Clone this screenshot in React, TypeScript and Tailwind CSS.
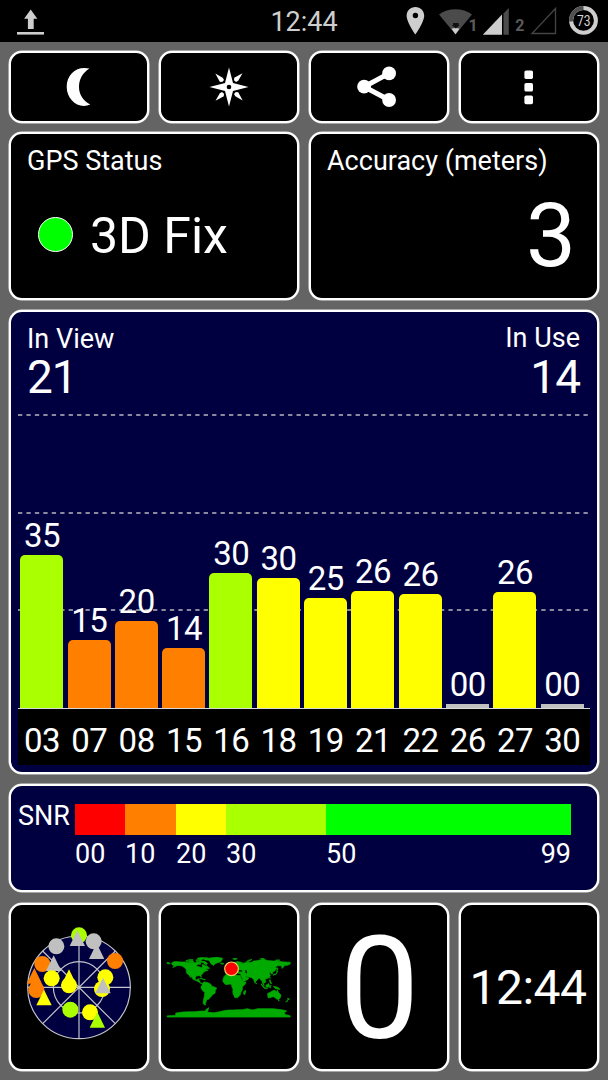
import type { ReactNode } from "react";

const card = "rounded-[13px] border-2 border-white shadow-[0_0_0_0.5px_#e8e8e8]";

function Card({
  tone = "bg-black",
  className = "",
  children,
}: {
  tone?: string;
  className?: string;
  children: ReactNode;
}) {
  return <div className={`${card} ${tone} ${className}`}>{children}</div>;
}

function StatusBar() {
  return (
    <header className="relative flex h-[42px] shrink-0 items-center justify-between bg-black">
      <svg className="ml-4 h-[42px] w-[30px]" viewBox="16 0 30 42" fill="#cecece">
        <path d="M30.700 9.500 37.300 18.700H33.700V29H27.900V18.700H24.100Z" />
        <rect x="17" y="32" width="27" height="2.600" />
      </svg>
      <span className="absolute inset-x-0 top-[9px] text-center text-[27px] leading-[27px] text-[#cecece]">
        12:44
      </span>
      <svg className="mr-1 h-[42px] w-[204px]" viewBox="400 0 204 42">
        <path
          fill="#cecece"
          fillRule="evenodd"
          d="M415.400 7c-5 0-8.800 3.900-8.800 8.800 0 6.300 8.800 18.700 8.800 18.700s8.800-12.400 8.800-18.700c0-4.900-3.800-8.800-8.800-8.800Zm0 5.800a2.700 2.700 0 1 1 0 5.400 2.700 2.700 0 0 1 0-5.400Z"
        />
        <path d="M439 14.500C448 7.500 463 7.500 472 14.500L455.500 34.500Z" fill="#4b4b4b" />
        <path d="M451.500 28.700Q455.500 27.500 459.500 28.700L455.500 34.300Z" fill="#cecece" />
        <path d="M453 23h5.600v2h1.200l-4 3.600-4-3.600H453Z" fill="#111" />
        <text x="468.500" y="31" fontSize="16" fontWeight="700" fill="#5b5b5b">1</text>
        <path d="M502 14.500V34.700H482.800Z" fill="#cecece" />
        <path d="M503.500 13.500 508.800 8V34.700H503.500Z" fill="#4b4b4b" />
        <text x="515.300" y="31" fontSize="16" fontWeight="700" fill="#5b5b5b">2</text>
        <path d="M555.500 8.500V33.500H532Z" fill="none" stroke="#444" strokeWidth="1.300" />
        <circle cx="583.500" cy="20.400" r="12.400" fill="none" stroke="#cecece" strokeWidth="4" />
        <path d="M571.150 21.500A12.400 12.400 0 0 1 583.500 8" fill="none" stroke="#505050" strokeWidth="4" />
        <text x="583.800" y="25.800" fontSize="15" textAnchor="middle" textLength="13.500" lengthAdjust="spacingAndGlyphs" fill="#d6d6d6">
          73
        </text>
      </svg>
    </header>
  );
}

const MoonIcon = () => (
  <svg className="h-10 w-10" viewBox="0 0 40 40">
    <path d="M30.400 1.600C23.500 6 20 12.500 20 20S24 33.500 31.300 37.600C19.500 42.500 7.700 33 7.700 19.800S18.500-1.500 30.400 1.600Z" fill="#fff" />
  </svg>
);

const CompassIcon = () => (
  <svg className="h-10 w-10" viewBox="-20 -20 40 40" fill="#fff">
    <path d="M0-19.500 4-4 19.500 0 4 4 0 19.500-4 4-19.500 0-4-4Z" />
    {[0, 90, 180, 270].map((a) => (
      <path key={a} transform={`rotate(${a})`} d="M13.500-13.700 9.200-6.300 7-5 5-6.800 5.200-9.200Z" />
    ))}
    <circle r="2.300" fill="#000" />
  </svg>
);

const ShareIcon = () => (
  <svg className="h-[42px] w-12" viewBox="-1.400 0.300 48 42" fill="#fff">
    <path d="M32.700 7.700 7.700 21 32.700 34.300" fill="none" stroke="#fff" strokeWidth="5" />
    <circle cx="7.700" cy="21" r="6.900" />
    <circle cx="32.700" cy="7.700" r="6.900" />
    <circle cx="32.700" cy="34.300" r="6.900" />
  </svg>
);

const DotsIcon = () => (
  <svg className="h-10 w-10" viewBox="0 0 40 40" fill="#fff">
    {[3.400, 16, 28.600].map((y) => (
      <rect key={y} x="15.400" y={y} width="8.600" height="8.600" rx="1.700" />
    ))}
  </svg>
);

const satellites = [
  { id: "03", snr: "35", height: 153, color: "bg-[#aaff00]" },
  { id: "07", snr: "15", height: 67.700, color: "bg-[#ff8000]" },
  { id: "08", snr: "20", height: 87, color: "bg-[#ff8000]" },
  { id: "15", snr: "14", height: 60, color: "bg-[#ff8000]" },
  { id: "16", snr: "30", height: 135, color: "bg-[#aaff00]" },
  { id: "18", snr: "30", height: 130, color: "bg-[#ffff00]" },
  { id: "19", snr: "25", height: 110.500, color: "bg-[#ffff00]" },
  { id: "21", snr: "26", height: 117.500, color: "bg-[#ffff00]" },
  { id: "22", snr: "26", height: 114, color: "bg-[#ffff00]" },
  { id: "26", snr: "00", height: 4.500, color: "bg-[#c0c0c0]" },
  { id: "27", snr: "26", height: 116.500, color: "bg-[#ffff00]" },
  { id: "30", snr: "00", height: 4.500, color: "bg-[#c0c0c0]" },
];

function SignalChart() {
  return (
    <Card tone="bg-[#000040]" className="relative flex h-[464px] flex-col">
      <div className="flex justify-between pl-4 pr-[17px] pt-[13px]">
        <div>
          <div className="text-[27px] leading-[28px]">In View</div>
          <div className="mt-[2px] text-[46px] leading-[44px] tracking-[-1px]">21</div>
        </div>
        <div className="text-right">
          <div className="text-[27px] leading-[27px]">In Use</div>
          <div className="mt-[3px] text-[46px] leading-[44px] tracking-[-1px]">14</div>
        </div>
      </div>
      <svg className="absolute left-[7px] top-0 h-[396px] w-[572px]" viewBox="18 312 572 396">
        {[415, 513, 610].map((y) => (
          <path key={y} d={`M18 ${y}H588`} stroke="#8a8a9e" strokeWidth="1.800" strokeDasharray="4.300 4.140" />
        ))}
      </svg>
      <div className="relative mx-[7px] flex flex-1 items-end pl-[2.300px] pr-[2px]">
        {satellites.map((s) => (
          <div key={s.id} className="flex w-[47.300px] shrink-0 flex-col">
            <span className="mb-[3px] w-[43.500px] text-center text-[33px] leading-8 tracking-[-0.500px]">
              {s.snr}
            </span>
            <div
              className={`w-[43px] ${s.height > 10 ? "rounded-t-[5px]" : ""} ${s.color}`}
              style={{ height: s.height }}
            />
          </div>
        ))}
      </div>
      <div className="mx-[7px] mb-[7px] flex h-[57px] border-t border-[#d8d8d8] bg-black pl-[2.300px] pt-[16px]">
        {satellites.map((s) => (
          <span
            key={s.id}
            className="w-[47.300px] shrink-0 pr-[3.800px] text-center text-[33px] leading-8 tracking-[-0.500px]"
          >
            {s.id}
          </span>
        ))}
      </div>
    </Card>
  );
}

const snrScale = [
  { label: "00", size: "w-[50px]", color: "bg-[#ff0000]" },
  { label: "10", size: "w-[51px]", color: "bg-[#ff8000]" },
  { label: "20", size: "w-[50px]", color: "bg-[#ffff00]" },
  { label: "30", size: "w-[100px]", color: "bg-[#aaff00]" },
  { label: "50", size: "w-[245px]", color: "bg-[#00ff00]" },
];

function SnrLegend() {
  return (
    <Card tone="bg-[#000040]" className="flex h-[108px] pl-[7px] pt-[18px]">
      <span className="-mt-px w-[57px] shrink-0 text-[27px] leading-[27px]">SNR</span>
      <div className="flex">
        {snrScale.map((s) => (
          <div key={s.label} className={s.size}>
            <div className={`h-[31px] ${s.color}`} />
            <div className="mt-[6px] flex justify-between text-[27px] leading-[27px]">
              <span>{s.label}</span>
              {s.label === "50" && <span>99</span>}
            </div>
          </div>
        ))}
      </div>
    </Card>
  );
}

const GREY = "#c0c0c0";
const ORANGE = "#ff8000";
const YELLOW = "#ffff00";
const LIME = "#aaff00";

const sky: { t: "c" | "t"; x: number; y: number; f: string }[] = [
  { t: "c", x: 207, y: 105, f: LIME },
  { t: "t", x: 202, y: 114, f: GREY },
  { t: "c", x: 139, y: 138, f: GREY },
  { t: "t", x: 260, y: 153, f: GREY },
  { t: "c", x: 251, y: 123, f: GREY },
  { t: "c", x: 315, y: 182, f: ORANGE },
  { t: "c", x: 97, y: 191, f: ORANGE },
  { t: "t", x: 131, y: 189, f: GREY },
  { t: "c", x: 125, y: 234, f: YELLOW },
  { t: "t", x: 73, y: 227, f: ORANGE },
  { t: "t", x: 79, y: 242, f: ORANGE },
  { t: "c", x: 79, y: 269, f: ORANGE },
  { t: "t", x: 102, y: 292, f: YELLOW },
  { t: "t", x: 177, y: 231, f: YELLOW },
  { t: "c", x: 177, y: 255, f: YELLOW },
  { t: "c", x: 286, y: 231, f: YELLOW },
  { t: "c", x: 276, y: 266, f: YELLOW },
  { t: "t", x: 279, y: 256, f: GREY },
  { t: "c", x: 181, y: 328, f: LIME },
  { t: "c", x: 240, y: 336, f: YELLOW },
  { t: "t", x: 262, y: 359, f: LIME },
];

const SkyPlot = () => (
  <svg className="h-[120px] w-[110px]" viewBox="42 80 330 360">
    <g fill="#000040" stroke="#c4c4cc" strokeWidth="3.500">
      <circle cx="207" cy="261" r="154" />
      <circle cx="207" cy="261" r="77" />
      <path d="M53 261H361M207 107V415M98 152 316 370M316 152 98 370" />
    </g>
    {sky.map((s, i) =>
      s.t === "c" ? (
        <circle key={i} cx={s.x} cy={s.y} r="24" fill={s.f} />
      ) : (
        <path key={i} d={`M${s.x} ${s.y - 24}l23 47h-46z`} fill={s.f} />
      ),
    )}
  </svg>
);

/* Coastlines as longitude,latitude outlines. */
const land = [
  "-168,66 -162,70 -156,71 -141,70 -128,70 -115,68 -108,68 -95,68 -94,72 -85,69 -82,67 -87,64 -94,61 -94,58 -88,56 -82,55 -80,51 -79,54 -77,57 -78,62 -73,62 -69,58 -65,60 -60,55 -56,52 -60,50 -66,50 -64,46 -60,46 -66,44 -70,43 -71,41 -74,40 -76,36 -81,31 -80,26 -82,28 -84,30 -90,30 -95,29 -97,26 -98,20 -95,18 -91,19 -90,21 -87,21 -88,16 -84,15 -84,11 -81,8 -78,9 -78,7 -82,7 -86,11 -92,14 -96,16 -105,20 -106,23 -112,30 -114,31 -110,24 -112,26 -115,30 -117,33 -121,35 -124,40 -124,48 -130,54 -136,58 -145,60 -152,59 -158,56 -164,54 -158,59 -165,61 -166,64 -161,65",
  "-73,78 -65,80 -50,82 -35,83.5 -18,81 -20,75 -24,70 -32,68 -40,65 -44,60 -51,64 -54,69 -58,75 -68,76",
  "-80,73 -70,71 -62,66 -66,62 -72,65 -73,68 -85,70 -88,73",
  "-116,73 -104,73 -102,69 -116,69",
  "-91,81 -80,83 -62,82 -75,79 -80,76 -90,77",
  "-125,74 -118,75 -118,72 -124,71",
  "-95,76.500 -80,76 -82,74 -96,74",
  "-118,76.500 -105,77 -104,75 -114,74.500",
  "-87,66 -82,66 -82,63 -86,63",
  "-180,69 -172,67 -172,65 -180,65",
  "-77,8 -72,12 -62,10 -52,5 -50,0 -44,-2 -35,-6 -39,-13 -40,-21 -48,-26 -53,-33 -57,-35 -57,-38 -62,-39 -65,-42 -66,-46 -68,-50 -69,-53 -66,-55 -72,-54 -75,-50 -74,-44 -73,-37 -71,-30 -70,-18 -76,-14 -81,-6 -80,-1 -77,4",
  "-6,36 10,37 11,33 20,31 32,31 35,28 37,21 43,12 51,12 48,5 40,-3 40,-11 35,-20 35,-24 32,-28 26,-34 18,-34 15,-27 12,-18 13,-10 9,-1 9,4 4,6 -8,4 -13,8 -17,14 -16,21 -13,28 -9,32",
  "49,-12 50,-16 47,-25 44,-24 44,-17",
  "-9,43 -9,37 -5,36 0,39 3,42 8,44 12,42 16,38 18,40 13,45 19,42 22,37 24,38 24,41 29,41 27,37 36,36 35,31 39,24 43,13 52,17 59,22 56,25 51,25 48,30 52,28 57,26 66,25 70,22 73,19 77,8 80,14 87,21 91,23 94,17 98,16 99,8 103,2 104,2 100,12 105,9 109,12 106,19 110,21 118,24 122,31 119,37 118,39 122,39 126,35 129,36 128,40 135,44 141,52 136,54 142,59 155,59 156,51 162,57 163,61 170,60 180,64 180,69 160,70 140,73 127,73 113,74 104,78 87,75 80,73 72,73 68,69 55,69 44,67 40,65 33,67 41,67 36,69 27,71 18,69 12,65 5,61 8,58 11,59 16,57 18,61 21,64 25,65 22,61 29,60 23,58 20,55 12,54 10,57 8,54 2,51 -4,48 -1,46 -2,43",
  "-5,50 1,51 -2,55 -3,58 -6,57 -4,54",
  "-10,52 -6,52 -6,55 -9,54",
  "-24,65 -19,63.500 -14,65 -16,66.500 -23,66.500",
  "12,80 25,80 22,77 15,77",
  "52,71 58,71 68,77 60,76 54,73",
  "93,80 104,80 104,78 95,78",
  "138,76 150,76 148,74 138,74",
  "130,31 132,34 137,35 141,38 141,45 145,43 141,40 140,35 135,33",
  "142,54 144,50 142,46",
  "120,18 122,18 122,14 126,8 124,6 120,12",
  "95,6 99,3 106,-5 114,-8 105,-7 98,0",
  "109,2 117,7 119,1 116,-4 110,-3",
  "120,1 125,1 122,-1 123,-5 120,-5",
  "131,-1 141,-3 147,-6 150,-10 143,-9 138,-8 133,-4",
  "114,-22 122,-18 129,-14 136,-12 137,-16 141,-17 142,-11 146,-19 153,-26 152,-33 147,-39 140,-38 136,-34 131,-31 124,-33 116,-35 115,-32",
  "145,-41 148,-41 147,-44",
  "173,-35 178,-38 175,-41 173,-39",
  "173,-41 171,-46 167,-46",
  "-85,22 -75,20 -78,22 -82,23.500",
  "-74,20 -68,19 -74,18",
  "80,9 82,7 80,6",
  "120,25 122,25 121,22",
  "-180,-87 -155,-86 -155,-79 -135,-76 -115,-75 -100,-75 -80,-73 -68,-73 -66,-68 -58,-63 -60,-70 -62,-76 -45,-78 -30,-76 -15,-72 0,-70 12,-70 30,-69 40,-69 55,-66 70,-70 85,-66 105,-66 130,-66 145,-68 160,-70 170,-73 163,-78 165,-83 180,-87 180,-90.500 -180,-90.500",
];

const WorldMap = () => (
  <svg className="h-[66px] w-[127px]" viewBox="32.500 41.500 381 198">
    <g transform="translate(220.500 137.500) scale(1.025 -1.030)">
      {land.map((p, i) => (
        <polygon key={i} points={p} fill="#00aa00" stroke="#00aa00" strokeWidth="2" />
      ))}
      <path d="M28 42 31 46 38 46 41 42ZM48 46 52 46 54 37 50 37Z" fill="#000" />
    </g>
    <circle cx="229" cy="86" r="20.500" fill="#ff0000" stroke="#e8d060" strokeWidth="3.500" />
  </svg>
);

export default function App() {
  return (
    <div className="flex h-[1080px] w-[608px] flex-col overflow-hidden bg-[#646464] font-['Roboto',sans-serif] text-white">
      <StatusBar />
      <main className="flex flex-col px-[9px] pt-[9px]">
        <div className="grid grid-cols-4 gap-x-[10px]">
          {[MoonIcon, CompassIcon, ShareIcon, DotsIcon].map((Icon, i) => (
            <button key={i} className={`${card} flex h-[72px] items-center justify-center bg-black`}>
              <Icon />
            </button>
          ))}
        </div>

        <div className="mt-[9px] grid grid-cols-2 gap-x-[10px]">
          <Card className="h-[168px] px-4 pt-[14px]">
            <div className="text-[27px] leading-[27px]">GPS Status</div>
            <div className="mt-[33px] flex items-center pl-[11px]">
              <span className="h-[35px] w-[35px] rounded-full border border-white bg-[#00ff00]" />
              <span className="ml-[17px] pt-[3px] text-[50px] leading-[50px]">3D Fix</span>
            </div>
          </Card>
          <Card className="h-[168px] pl-4 pr-[21px] pt-[14px]">
            <div className="text-[27px] leading-[27px]">Accuracy (meters)</div>
            <div className="mt-[16px] text-right text-[89px] leading-[90px]">3</div>
          </Card>
        </div>

        <div className="mt-[10px]">
          <SignalChart />
        </div>
        <div className="mt-[10px]">
          <SnrLegend />
        </div>

        <div className="mt-[11px] grid grid-cols-4 gap-x-[10px]">
          <Card className="flex h-[168px] items-center justify-center">
            <SkyPlot />
          </Card>
          <Card className="flex h-[168px] items-center justify-center">
            <WorldMap />
          </Card>
          <Card className="flex h-[168px] items-center justify-center pl-px pt-1 text-[143px] leading-[143px]">
            0
          </Card>
          <Card className="flex h-[168px] items-center justify-center pr-[2px] pt-0.5 text-[48px] leading-[48px] tracking-[-0.500px]">
            12:44
          </Card>
        </div>
      </main>
    </div>
  );
}
